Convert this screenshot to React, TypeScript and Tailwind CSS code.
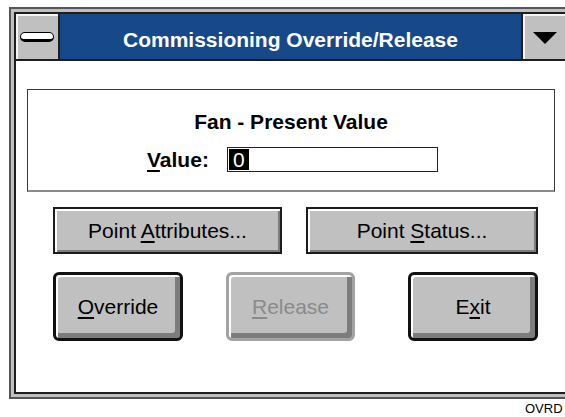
const face = 'bg-[#c0c0c0]'

function U({ children }: { children: string }) {
  return <span className="underline decoration-[1.5px] underline-offset-[3px]">{children}</span>
}

function FlatButton({ width, children }: { width: string; children: React.ReactNode }) {
  return (
    <div
      className={`${width} h-[47px] border-2 border-[#1c1c1c] ${face} shadow-[inset_2px_2px_0_#ffffff,inset_-2px_-2px_0_#7c7c7c] flex items-center justify-center text-[21px] leading-[24px]`}
    >
      <span>{children}</span>
    </div>
  )
}

function BigButton({
  width,
  disabled,
  children,
}: {
  width: string
  disabled?: boolean
  children: React.ReactNode
}) {
  return (
    <div
      className={`${width} h-[69px] rounded-[6px] border-[3px] ${
        disabled ? 'border-[#a3a3a3] text-[#8a8a8a]' : 'border-[#111] text-black'
      } ${face} shadow-[inset_2px_2px_0_#ffffff,inset_-5px_-5px_0_#7d7d7d] flex items-center justify-center text-[21px] leading-[24px]`}
    >
      <span>{children}</span>
    </div>
  )
}

export default function App() {
  return (
    <div className="w-[565px] h-[417px] overflow-hidden bg-white text-black font-['Liberation_Sans',Arial,sans-serif]">
      <div className="ml-[9px] mt-[7px] w-[564px] h-[392px] border-2 border-[#555] bg-[#c0c0c0] p-[3px]">
        <div className="w-full h-full border-2 border-[#1e1e1e] bg-white flex flex-col">
          {/* title bar */}
          <div className="h-[47px] flex border-b-2 border-[#1e1e1e] shrink-0">
            <div className={`w-[44px] ${face} border-r-2 border-[#1e1e1e] shadow-[inset_2px_2px_0_#f4f4f4] flex items-center justify-center pt-[1px]`}>
              <div className="w-[34px] h-[10px] rounded-full border border-black border-b-[3px] bg-white" />
            </div>
            <div className="flex-1 bg-[#17488a] flex items-center justify-center pt-[7px] text-white font-bold text-[21px] leading-[24px]">
              Commissioning Override/Release
            </div>
            <div className={`w-[45px] border-l-2 border-[#1e1e1e] ${face} shadow-[inset_2px_2px_0_#f4f4f4] flex items-center pl-[10px] pt-[2px]`}>
              <svg width="24" height="12" viewBox="0 0 24 12">
                <polygon points="0,0 24,0 12,12" fill="#000" />
              </svg>
            </div>
          </div>

          {/* point value group */}
          <div className="mt-[28px] mx-[11px] h-[103px] border border-[#3a3a3a] border-b-[#8a8a8a] border-b-2 pt-[20px]">
            <div className="text-center font-bold text-[21px] leading-[24px]">Fan - Present Value</div>
            <div className="mt-[13px] flex items-center pl-[119px] h-[25px]">
              <span className="font-bold text-[21px] leading-[24px]">
                <U>V</U>alue:
              </span>
              <div className="ml-[18px] w-[211px] h-[25px] border border-[#222] p-[1px] flex">
                <span className="bg-black text-white text-[21px] leading-[21px] px-[4px]">0</span>
              </div>
            </div>
          </div>

          {/* secondary buttons */}
          <div className="mt-[15px] ml-[37px] flex gap-[24px]">
            <FlatButton width="w-[229px]">
              Point <U>A</U>ttributes...
            </FlatButton>
            <FlatButton width="w-[232px]">
              Point <U>S</U>tatus...
            </FlatButton>
          </div>

          {/* main actions */}
          <div className="mt-[18px] ml-[37px] flex">
            <BigButton width="w-[130px]">
              <U>O</U>verride
            </BigButton>
            <div className="ml-[43px]">
              <BigButton width="w-[129px]" disabled>
                <U>R</U>elease
              </BigButton>
            </div>
            <div className="ml-[53px]">
              <BigButton width="w-[130px]">
                E<U>x</U>it
              </BigButton>
            </div>
          </div>
        </div>
      </div>
      <div className="mt-[3px] pl-[525px] whitespace-nowrap text-[13px] leading-[13px]">OVRD</div>
    </div>
  )
}
